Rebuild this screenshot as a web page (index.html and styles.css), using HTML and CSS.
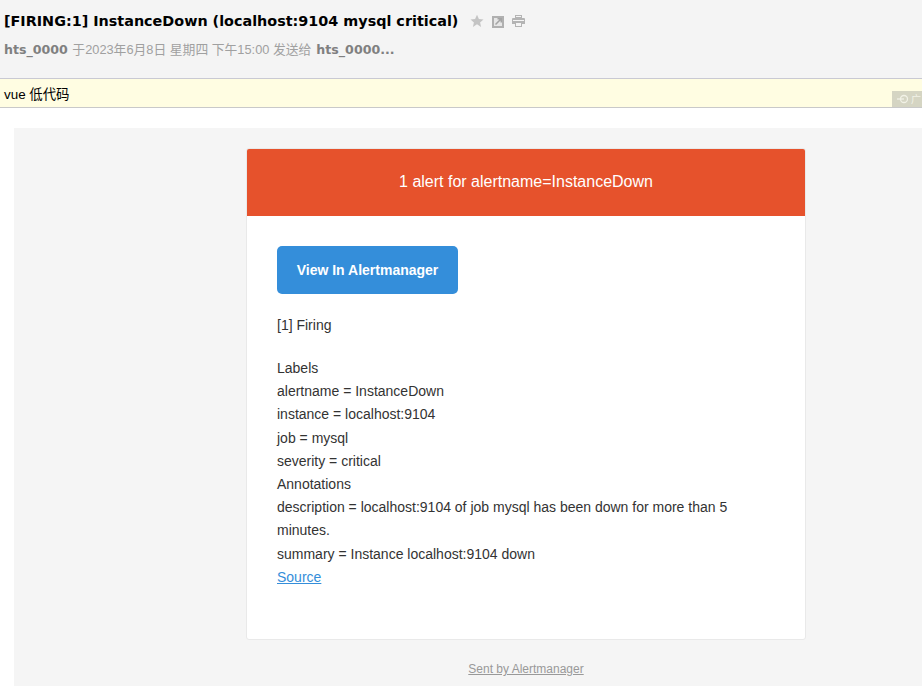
FILE: index.html
```html
<!DOCTYPE html>
<html lang="zh">
<head>
<meta charset="utf-8">
<title>InstanceDown</title>
<link rel="stylesheet" href="styles.css">
</head>
<body>
<header class="head">
  <div class="subject">
    <h1 class="title">[FIRING:1] InstanceDown (localhost:9104 mysql critical)</h1>
    <svg class="ico star" width="14" height="14" viewBox="0 0 14 14"><path fill="#c4c4c4" d="M7 .8l1.900 4.200 4.600.5-3.400 3.100 1 4.500L7 10.300l-4.100 2.800 1-4.500L.5 5.500l4.600-.5z"/></svg>
    <svg class="ico box" width="13" height="13" viewBox="0 0 13 13"><path fill="#b0b0b0" d="M0 1h12v12H0z"/><path fill="#e6e6e6" d="M2 3h8v8H2z"/><path fill="#a4a4a4" d="M5.500 3H10v4.500H8.500V5.600L4 10 3 9l4.400-4.500H5.500z"/></svg>
    <svg class="ico" width="13" height="12" viewBox="0 0 13 12"><path fill="#b4b4b4" d="M3 0h7v3H3zM1 3h11a1 1 0 0 1 1 1v5h-3v3H3V9H0V4a1 1 0 0 1 1-1z"/><path fill="#f4f4f4" d="M4 1h5v1H4zM1 5h11v1H1zM4 8h5v3H4z"/></svg>
  </div>
  <p class="meta"><b>hts_0000</b> <span class="lite">于2023年6月8日 星期四 下午15:00 发送给</span> <b>hts_0000...</b></p>
</header>
<div class="tagbar">
  <span>vue 低代码</span>
  <div class="adflag"><svg width="12" height="10" viewBox="0 0 12 10"><circle cx="7" cy="5" r="3.500" fill="none" stroke="#f2f2e6" stroke-width="1.300"/><path stroke="#f2f2e6" stroke-width="1.300" d="M0 5h7"/></svg><span class="adtext">广</span></div>
</div>
<main class="mailbody">
  <section class="card">
    <div class="banner">1 alert for alertname=InstanceDown</div>
    <div class="content">
      <a class="btn" href="#">View In Alertmanager</a>
      <p class="firing">[1] Firing</p>
      <div class="lines">
        <div>Labels</div>
        <div>alertname = InstanceDown</div>
        <div>instance = localhost:9104</div>
        <div>job = mysql</div>
        <div>severity = critical</div>
        <div>Annotations</div>
        <div>description = localhost:9104 of job mysql has been down for more than 5 minutes.</div>
        <div>summary = Instance localhost:9104 down</div>
        <div><a class="src" href="#">Source</a></div>
      </div>
    </div>
  </section>
  <footer class="foot"><a href="#">Sent by Alertmanager</a></footer>
</main>
</body>
</html>
```
FILE: styles.css
```css
html, body { margin: 0; padding: 0; height: 686px; overflow: hidden; background: #fff; }
body { font-family: "Liberation Sans", "Noto Sans CJK SC", sans-serif; color: #000; }
.head { background: #f4f4f4; height: 78px; box-sizing: border-box; padding: 11px 4px 0; }
.subject { display: flex; align-items: center; height: 20px; }
.title { margin: 0; font: bold 14.370px/20px "DejaVu Sans", "Noto Sans CJK SC", sans-serif; color: #000; white-space: nowrap; }
.ico { margin-left: 7px; flex: none; }
.star { margin-left: 12px; }
.box { margin-left: 8px; }
.meta { margin: 10px 0 0; font: 12.600px/18px "DejaVu Sans", "Noto Sans CJK SC", sans-serif; color: #808080; white-space: nowrap; }
.meta b { font-weight: bold; color: #808080; }
.lite { font-family: "Liberation Sans", "Noto Sans CJK SC", sans-serif; font-size: 12.800px; color: #a0a0a0; margin: 0 1px 0 .5px; }
.tagbar { position: relative; height: 30px; box-sizing: border-box; background: #fffde2; border-top: 1px solid #c9c9d3; border-bottom: 1px solid #c9c9c9; padding-left: 4px; font-size: 13.400px; line-height: 31px; }
.adflag { position: absolute; right: 0; top: 12px; width: 30px; height: 16px; background: #d5d5c3; display: flex; align-items: center; padding-left: 5px; box-sizing: border-box; gap: 2px; overflow: hidden; }
.adtext { font-size: 10px; line-height: 15px; color: #f2f2e6; }
.mailbody { margin: 20px 0 0 14px; background: #f5f5f5; height: 560px; padding-top: 20px; box-sizing: border-box; font-size: 14px; line-height: 23.200px; color: #333; }
.card { margin-left: 232px; width: 560px; height: 492px; box-sizing: border-box; background: #fff; border: 1px solid #e9e9e9; border-radius: 3px; overflow: hidden; }
.banner { background: #e6522c; height: 67px; color: #fff; font-size: 16px; line-height: 65px; text-align: center; }
.content { padding: 30px 30px 0; }
.btn { display: block; width: 181px; height: 48px; box-sizing: border-box; background: #348eda; border-radius: 5px; color: #fff; font-weight: bold; text-align: center; text-decoration: none; line-height: 48px; }
.firing { margin: 20px 0 19.900px; line-height: 23px; }
.lines { width: 498px; }
.src { color: #348eda; }
.foot { margin-top: 18px; margin-left: 232px; width: 560px; text-align: center; font-size: 12px; line-height: 23px; }
.foot a { color: #999; }
```
